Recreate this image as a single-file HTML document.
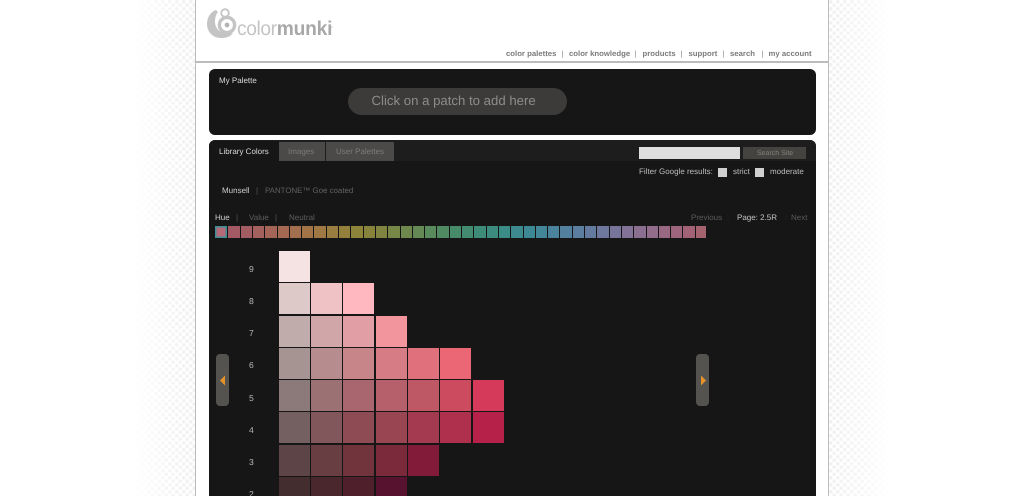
<!DOCTYPE html>
<html><head><meta charset="utf-8">
<style>
html,body{margin:0;padding:0;width:1024px;height:496px;overflow:hidden;background:#fff}
body{font-family:"Liberation Sans",sans-serif;position:relative;text-rendering:geometricPrecision}
#w{position:absolute;left:0;top:0;width:1024px;height:496px;overflow:hidden;background:#fff;filter:blur(.3px)}
.a{position:absolute;white-space:nowrap}
.t{font-size:8px;line-height:10px;margin-top:.7px}
.nv{font-size:7.75px;line-height:10px;font-weight:bold;color:#7b7b7b;top:49px}
.sp{font-size:7.6px;line-height:10px;color:#888;top:49px}
.bgl,.bgr{position:absolute;top:0;width:70px;height:496px;background-color:#fff;background-image:radial-gradient(circle at 25% 25%,#eee 0,#eee 1.6px,transparent 2.2px),radial-gradient(circle at 75% 75%,#eee 0,#eee 1.6px,transparent 2.2px);background-size:7px 7px}
.bgl{left:126px}
.bgr{left:829px}
.fl,.fr{position:absolute;top:0;width:70px;height:496px}
.fl{left:126px;background:linear-gradient(90deg,#fff 0,#fff 12%,rgba(255,255,255,.55) 50%,rgba(255,255,255,.15) 100%)}
.fr{left:829px;background:linear-gradient(270deg,#fff 0,#fff 12%,rgba(255,255,255,.55) 50%,rgba(255,255,255,.15) 100%)}
.col{position:absolute;left:195px;top:0;width:632px;height:496px;background:#fff;border-left:1px solid #bdbdbd;border-right:1px solid #bdbdbd}
.p{position:absolute;background:#161616}
.s{position:absolute;top:226px;width:11.4px;height:12px;opacity:.9}
.c{position:absolute;width:31.2px;height:31px}
.n{position:absolute;left:249px;font-size:8.6px;color:#b8b8b8}
</style></head><body><div id="w">
<div class="bgl"></div><div class="fl"></div><div class="bgr"></div><div class="fr"></div>
<div class="col"></div>
<div class="a" style="left:196px;top:61px;width:632px;height:2px;background:#bcbcbc"></div>

<svg class="a" style="left:205px;top:7px" width="36" height="33" viewBox="0 0 36 33">
<path d="M11 3C5 5 2 11 2 17c0 8 6 14 14 14 5 0 9-1 12-5-3 1-7 1-10 0-5-2-8-6-8-11 0-4 1-8 3-10z" fill="#c4c4c4"/>
<circle cx="22" cy="18" r="7.6" fill="none" stroke="#c4c4c4" stroke-width="3.4"/>
<circle cx="22" cy="18" r="2.4" fill="#b4b4b4"/>
<circle cx="20" cy="6" r="3.8" fill="none" stroke="#c4c4c4" stroke-width="1.8"/>
</svg>
<div class="a" style="left:237px;top:17px;font-size:20px;line-height:24px;letter-spacing:-.4px;color:#c4c4c4;transform:scaleX(.96);transform-origin:0 0">color<b style="color:#a8a8a8;letter-spacing:-.2px">munki</b></div>
<div class="a" style="left:329px;top:25px;font-size:4px;color:#bbb">™</div>

<div class="a nv" style="left:506px">color palettes</div>
<div class="a sp" style="left:561.5px">|</div>
<div class="a nv" style="left:569px">color knowledge</div>
<div class="a sp" style="left:634.5px">|</div>
<div class="a nv" style="left:642.5px">products</div>
<div class="a sp" style="left:680.5px">|</div>
<div class="a nv" style="left:688.5px">support</div>
<div class="a sp" style="left:722.5px">|</div>
<div class="a nv" style="left:730px">search</div>
<div class="a sp" style="left:761.5px">|</div>
<div class="a nv" style="left:768.5px">my account</div>

<div class="p" style="left:209px;top:69px;width:607px;height:66px;border-radius:6px"></div>
<div class="a t" style="left:219px;top:75px;color:#dcdcdc">My Palette</div>
<div class="a" style="left:348px;top:88px;width:219px;height:27px;border-radius:13.5px;background:#3c3b39"></div>
<div class="a" style="left:371.5px;top:93px;font-size:13.2px;line-height:15px;color:#8c8c8a">Click on a patch to add here</div>

<div class="p" style="left:209px;top:140px;width:607px;height:370px;border-radius:6px"></div>
<div class="a" style="left:209px;top:140px;width:607px;height:21px;background:#1d1d1d;border-radius:6px 6px 0 0"></div>
<div class="a" style="left:209px;top:141px;width:70px;height:20px;background:#161616;border-radius:6px 0 0 0"></div>
<div class="a t" style="left:219px;top:146px;color:#d8d8d8">Library Colors</div>
<div class="a" style="left:279px;top:142px;width:46px;height:19px;background:#4c4a48"></div>
<div class="a" style="left:326px;top:142px;width:68px;height:19px;background:#4c4a48"></div>
<div class="a t" style="left:288px;top:146px;color:#7d7b79">Images</div>
<div class="a t" style="left:336px;top:146px;color:#7d7b79">User Palettes</div>

<div class="a" style="left:639px;top:147px;width:101px;height:12px;background:#dedede"></div>
<div class="a" style="left:743px;top:147px;width:63px;height:12px;background:#44433f"></div>
<div class="a" style="left:757px;top:149px;font-size:7px;line-height:9px;color:#85847f">Search Site</div>
<div class="a t" style="left:639px;top:166px;color:#bdbdbd">Filter Google results:</div>
<div class="a" style="left:718px;top:168px;width:9px;height:9px;background:#cfcfcf"></div>
<div class="a t" style="left:733px;top:166px;color:#bdbdbd">strict</div>
<div class="a" style="left:755px;top:168px;width:9px;height:9px;background:#cfcfcf"></div>
<div class="a t" style="left:770px;top:166px;color:#bdbdbd">moderate</div>

<div class="a t" style="left:222px;top:185px;color:#d0d0d0">Munsell</div>
<div class="a t" style="left:256px;top:185px;color:#555">|</div>
<div class="a t" style="left:265px;top:185px;color:#626262;font-size:7.9px">PANTONE™ Goe coated</div>

<div class="a t" style="left:215px;top:212px;color:#d0d0d0">Hue</div>
<div class="a t" style="left:236px;top:212px;color:#555">|</div>
<div class="a t" style="left:249px;top:212px;color:#5e5e5e">Value</div>
<div class="a t" style="left:275px;top:212px;color:#555">|</div>
<div class="a t" style="left:289px;top:212px;color:#5e5e5e">Neutral</div>
<div class="a t" style="left:691px;top:212px;color:#5a5a5a">Previous</div>
<div class="a t" style="left:727px;top:212px;color:#333">:</div>
<div class="a t" style="left:737px;top:212px;color:#c4c4c4">Page: 2.5R</div>
<div class="a t" style="left:785px;top:212px;color:#333">:</div>
<div class="a t" style="left:791px;top:212px;color:#5a5a5a">Next</div>

<div class="s" style="left:215px;width:12px;background:#b46a78;box-shadow:inset 0 0 0 1.5px #3c8f95;opacity:1"></div>
<div class="s" style="left:228.3px;background:#b2626d"></div>
<div class="s" style="left:240.6px;background:#b2646a"></div>
<div class="s" style="left:252.9px;background:#b36864"></div>
<div class="s" style="left:265.2px;background:#b46d5e"></div>
<div class="s" style="left:277.5px;background:#b47259"></div>
<div class="s" style="left:289.8px;background:#b37853"></div>
<div class="s" style="left:302.1px;background:#b27d4e"></div>
<div class="s" style="left:314.4px;background:#ae8349"></div>
<div class="s" style="left:326.7px;background:#a98845"></div>
<div class="s" style="left:339px;background:#a28c41"></div>
<div class="s" style="left:351.3px;background:#9b8f3f"></div>
<div class="s" style="left:363.6px;background:#938f40"></div>
<div class="s" style="left:375.9px;background:#8b9146"></div>
<div class="s" style="left:388.2px;background:#82934c"></div>
<div class="s" style="left:400.5px;background:#789553"></div>
<div class="s" style="left:412.8px;background:#6d965b"></div>
<div class="s" style="left:425.1px;background:#619763"></div>
<div class="s" style="left:437.4px;background:#57976b"></div>
<div class="s" style="left:449.7px;background:#4d9873"></div>
<div class="s" style="left:462px;background:#47987b"></div>
<div class="s" style="left:474.3px;background:#439883"></div>
<div class="s" style="left:486.6px;background:#41988b"></div>
<div class="s" style="left:498.9px;background:#3f9893"></div>
<div class="s" style="left:511.2px;background:#40979b"></div>
<div class="s" style="left:523.5px;background:#4395a1"></div>
<div class="s" style="left:535.8px;background:#4892a6"></div>
<div class="s" style="left:548.1px;background:#508faa"></div>
<div class="s" style="left:560.4px;background:#598cac"></div>
<div class="s" style="left:572.7px;background:#6388ad"></div>
<div class="s" style="left:585px;background:#6d85ad"></div>
<div class="s" style="left:597.3px;background:#7882ab"></div>
<div class="s" style="left:609.6px;background:#837fa8"></div>
<div class="s" style="left:621.9px;background:#8d7ca4"></div>
<div class="s" style="left:634.2px;background:#97799e"></div>
<div class="s" style="left:646.5px;background:#a07698"></div>
<div class="s" style="left:658.8px;background:#a77290"></div>
<div class="s" style="left:671.1px;background:#ac6f88"></div>
<div class="s" style="left:683.4px;background:#b06c80"></div>
<div class="s" style="left:695.7px;width:10.6px;background:#b26a78"></div>

<div class="n" style="top:264px">9</div>
<div class="n" style="top:296px">8</div>
<div class="n" style="top:328px">7</div>
<div class="n" style="top:360px">6</div>
<div class="n" style="top:393px">5</div>
<div class="n" style="top:425px">4</div>
<div class="n" style="top:457px">3</div>
<div class="n" style="top:489px">2</div>

<div class="c" style="left:278.5px;top:251px;background:#f5e3e3"></div>

<div class="c" style="left:278.5px;top:283.4px;background:#dcc9c8"></div>
<div class="c" style="left:311px;top:283.4px;background:#efc3c5"></div>
<div class="c" style="left:343.3px;top:283.4px;background:#ffb8bf"></div>

<div class="c" style="left:278.5px;top:315.6px;background:#c0acab"></div>
<div class="c" style="left:311px;top:315.6px;background:#d0a6a9"></div>
<div class="c" style="left:343.3px;top:315.6px;background:#e19ea5"></div>
<div class="c" style="left:375.6px;top:315.6px;background:#f2959d"></div>

<div class="c" style="left:278.5px;top:347.9px;background:#a69493"></div>
<div class="c" style="left:311px;top:347.9px;background:#b68c8e"></div>
<div class="c" style="left:343.3px;top:347.9px;background:#c78489"></div>
<div class="c" style="left:375.6px;top:347.9px;background:#d57c85"></div>
<div class="c" style="left:407.9px;top:347.9px;background:#e0717c"></div>
<div class="c" style="left:440.2px;top:347.9px;background:#eb6775"></div>

<div class="c" style="left:278.5px;top:380.2px;background:#8c7a7a"></div>
<div class="c" style="left:311px;top:380.2px;background:#9b7174"></div>
<div class="c" style="left:343.3px;top:380.2px;background:#aa666f"></div>
<div class="c" style="left:375.6px;top:380.2px;background:#b5606b"></div>
<div class="c" style="left:407.9px;top:380.2px;background:#bf5865"></div>
<div class="c" style="left:440.2px;top:380.2px;background:#cd4b5e"></div>
<div class="c" style="left:472.5px;top:380.2px;background:#d53a5b"></div>

<div class="c" style="left:278.5px;top:412.4px;background:#746060"></div>
<div class="c" style="left:311px;top:412.4px;background:#82575b"></div>
<div class="c" style="left:343.3px;top:412.4px;background:#8f4b54"></div>
<div class="c" style="left:375.6px;top:412.4px;background:#9a4552"></div>
<div class="c" style="left:407.9px;top:412.4px;background:#a43a4f"></div>
<div class="c" style="left:440.2px;top:412.4px;background:#ae304d"></div>
<div class="c" style="left:472.5px;top:412.4px;background:#b52149"></div>

<div class="c" style="left:278.5px;top:444.7px;background:#5d4547"></div>
<div class="c" style="left:311px;top:444.7px;background:#683e43"></div>
<div class="c" style="left:343.3px;top:444.7px;background:#71333c"></div>
<div class="c" style="left:375.6px;top:444.7px;background:#7b2a3b"></div>
<div class="c" style="left:407.9px;top:444.7px;background:#811b39"></div>

<div class="c" style="left:278.5px;top:477px;background:#432d2f"></div>
<div class="c" style="left:311px;top:477px;background:#4a272d"></div>
<div class="c" style="left:343.3px;top:477px;background:#4f1f2b"></div>
<div class="c" style="left:375.6px;top:477px;background:#56122e"></div>

<div class="a" style="left:216px;top:354px;width:13px;height:52px;border-radius:4px;background:#55534f"></div>
<svg class="a" style="left:218.5px;top:375px" width="7" height="11"><path d="M6 0.5V10.5L1 5.5Z" fill="#e8922a"/></svg>
<div class="a" style="left:696px;top:354px;width:13px;height:52px;border-radius:4px;background:#55534f"></div>
<svg class="a" style="left:699.5px;top:375px" width="7" height="11"><path d="M1 0.5V10.5L6 5.5Z" fill="#e8922a"/></svg>
</div></body></html>
